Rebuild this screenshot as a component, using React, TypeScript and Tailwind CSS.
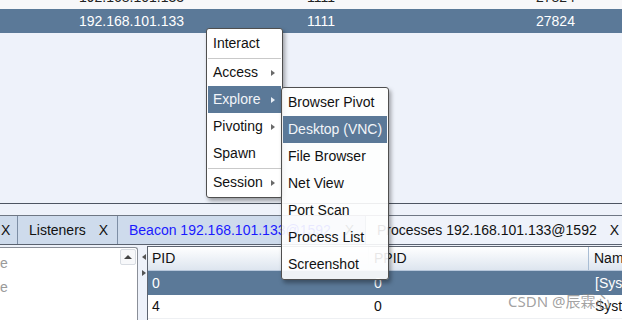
type MenuItem = {
  label: string
  sub?: boolean
  active?: boolean
  sepAfter?: boolean
}

const mainItems: MenuItem[] = [
  { label: "Interact", sepAfter: true },
  { label: "Access", sub: true },
  { label: "Explore", sub: true, active: true },
  { label: "Pivoting", sub: true },
  { label: "Spawn", sepAfter: true },
  { label: "Session", sub: true },
]

const exploreItems: MenuItem[] = [
  { label: "Browser Pivot" },
  { label: "Desktop (VNC)", active: true },
  { label: "File Browser" },
  { label: "Net View" },
  { label: "Port Scan" },
  { label: "Process List" },
  { label: "Screenshot" },
]

function Arrow({ light }: { light?: boolean }) {
  return (
    <span
      className={
        light
          ? "w-0 h-0 border-y-[3px] border-y-transparent border-l-[4px] border-l-[#e8eef5]"
          : "w-0 h-0 border-y-[3px] border-y-transparent border-l-[4px] border-l-[#6a6a6a]"
      }
    />
  )
}

function MenuRows({ items }: { items: MenuItem[] }) {
  return (
    <>
      {items.map((it) => (
        <div key={it.label}>
          <div
            className={
              it.active
                ? "h-[27px] flex items-center justify-between pl-[5px] pr-[6px] bg-[#5b7998] text-[#f2f5f9]"
                : "h-[27px] flex items-center justify-between pl-[5px] pr-[6px] text-[#111]"
            }
          >
            <span>{it.label}</span>
            {it.sub && <Arrow light={it.active} />}
          </div>
          {it.sepAfter && (
            <div className="h-[2px] flex items-center">
              <div className="h-px w-full bg-[#c9c9c9]" />
            </div>
          )}
        </div>
      ))}
    </>
  )
}

export default function App() {
  return (
    <div className="relative w-[622px] h-[320px] overflow-hidden bg-[#eef2fa] font-['Liberation_Sans',Arial,sans-serif] text-[14px]">
      {/* top table */}
      <div className="h-[204px] flex flex-col border-b border-[#4d5562] bg-[#eef2fa]">
        <div className="flex shrink-0 h-[24px] mt-[-15px] items-center bg-[#f7f7f9] text-[#222]">
          <div className="w-[307px] pl-[79px]">192.168.101.133</div>
          <div className="w-[229px]">1111</div>
          <div className="flex-1">27824</div>
        </div>
        <div className="flex shrink-0 h-[24px] items-center bg-[#5b7998] text-white">
          <div className="w-[307px] pl-[79px]">192.168.101.133</div>
          <div className="w-[229px]">1111</div>
          <div className="flex-1">27824</div>
        </div>
      </div>
      <div className="h-[12px] border-b border-[#6f7784]" />

      {/* tabs */}
      <div className="flex h-[29px] border-b border-[#5a6270] text-[#111]">
        <div className="w-[18px] shrink-0 flex items-center pl-[1px] bg-[#cedbec] border-r border-[#7d8ea5]">X</div>
        <div className="w-[100px] shrink-0 flex items-center pl-[11px] bg-[#cedbec] border-r border-[#7d8ea5]">
          <span>Listeners</span>
          <span className="ml-[13px]">X</span>
        </div>
        <div className="w-[248px] shrink-0 flex items-center pl-[11px] bg-[#cedbec] border-r border-[#7d8ea5] text-[#1a1aff] whitespace-nowrap">
          <span>Beacon 192.168.101.133@1592</span>
          <span className="ml-[14px] text-[#111]">X</span>
        </div>
        <div className="flex-1 min-w-0 flex items-center pl-[11px] bg-[#eef2fa] whitespace-nowrap">
          <span>Processes 192.168.101.133@1592</span>
          <span className="ml-[13px]">X</span>
        </div>
      </div>

      {/* content */}
      <div className="flex pt-[1px] h-[80px]">
        <div className="w-[138px] shrink-0 mt-[1px] bg-white border-r border-t border-[#8a8f98] rounded-tr-[3px] flex">
          <div className="flex-1 text-[#9a9a9a] pt-[3px]">
            <div className="h-[24px] flex items-center">e</div>
            <div className="h-[24px] flex items-center">e</div>
          </div>
          <div className="w-[17px] pt-[1px] pr-[1px]">
            <div className="h-[16px] border border-[#d8dce2] rounded-[2px] bg-[#f7f8fa] flex items-center justify-center">
              <span className="w-0 h-0 border-x-[4px] border-x-transparent border-b-[4px] border-b-[#444]" />
            </div>
          </div>
        </div>
        <div className="w-[9px] shrink-0 flex flex-col items-center pt-[8px] gap-[10px] pl-[3px]">
          <span className="w-0 h-0 border-y-[3px] border-y-transparent border-r-[4px] border-r-[#555]" />
          <span className="w-0 h-0 border-y-[3px] border-y-transparent border-l-[4px] border-l-[#555]" />
        </div>
        <div className="flex-1 min-w-0 overflow-hidden border-l border-t border-[#5d6470] bg-white text-[#111]">
          <div className="flex h-[24px] bg-gradient-to-b from-white to-[#dde5ef] border-b border-[#b7c7db]">
            <div className="w-[221px] shrink-0 pl-[4px] flex items-center border-r border-[#e3e8ef]">PID</div>
            <div className="w-[220px] shrink-0 pl-[5px] flex items-center border-r border-[#a9bdd4]">PPID</div>
            <div className="flex-1 pl-[5px] flex items-center whitespace-nowrap">Name</div>
          </div>
          <div className="flex h-[24px] bg-[#5b7998] text-white">
            <div className="w-[221px] shrink-0 pl-[4px] flex items-center">0</div>
            <div className="w-[220px] shrink-0 pl-[5px] flex items-center">0</div>
            <div className="flex-1 pl-[6px] flex items-center whitespace-nowrap">[System Process]</div>
          </div>
          <div className="flex h-[24px] border-b border-[#eef0f3]">
            <div className="w-[221px] shrink-0 pl-[4px] flex items-center">4</div>
            <div className="w-[220px] shrink-0 pl-[5px] flex items-center">0</div>
            <div className="flex-1 pl-[6px] flex items-center whitespace-nowrap">System</div>
          </div>
        </div>
      </div>

      {/* watermark */}
      <div className="absolute left-[508px] top-[290px] text-[15px] text-[#8a8a8a]/80 font-['Noto_Sans','Noto_Sans_CJK_SC',sans-serif] whitespace-nowrap">
        CSDN @辰霖心
      </div>

      {/* context menu */}
      <div className="absolute left-[206px] top-[28px] w-[77px] p-px bg-white border border-[#4f4f4f] rounded-[3px] shadow-[2px_3px_4px_rgba(0,0,0,0.35)]">
        <MenuRows items={mainItems} />
      </div>
      <div className="absolute left-[281px] top-[87px] w-[108px] p-px bg-white/90 border border-[#4f4f4f] rounded-[3px] shadow-[2px_3px_4px_rgba(0,0,0,0.35)] whitespace-nowrap">
        <MenuRows items={exploreItems} />
      </div>
    </div>
  )
}
